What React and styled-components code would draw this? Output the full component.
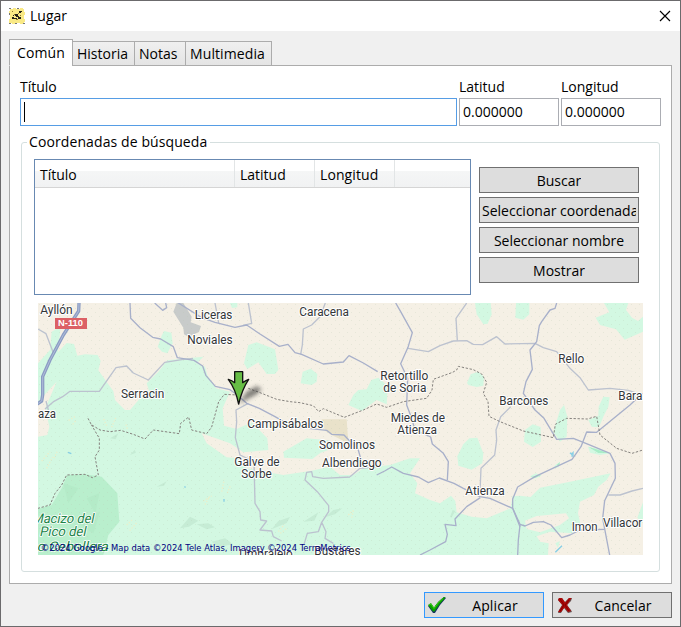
import React from "react";
import styled, { createGlobalStyle } from "styled-components";

const Global = createGlobalStyle`
  * { box-sizing: border-box; }
  body { margin: 0; background: #f0f0f0; }
`;

const Dialog = styled.div`
  width: 681px;
  height: 627px;
  display: flex;
  flex-direction: column;
  border: 1px solid #6b6a6c;
  background: #f0f0f0;
  color: #000;
  font: 14px/20px "Open Sans", "Noto Sans", sans-serif;
  overflow: hidden;
`;

const TitleBar = styled.header`
  height: 30px;
  flex: none;
  display: flex;
  align-items: center;
  justify-content: space-between;
  padding: 0 9px 0 8px;
  background: #fff;
`;

const Caption = styled.div`
  display: flex;
  align-items: center;
  gap: 5px;
`;

const Label = styled.span`
  display: block;
  white-space: nowrap;
  letter-spacing: ${(p) => p.$track || 0}px;
`;

const Tabs = styled.nav`
  display: flex;
  align-items: flex-end;
  height: 27px;
  margin: 8px 0 -1px 8px;
  flex: none;
  position: relative;
`;

const Tab = styled.div`
  width: ${(p) => p.$width}px;
  height: ${(p) => (p.$active ? 27 : 25)}px;
  padding: ${(p) => (p.$active ? "3px 0 0 7px" : "2px 0 0 4px")};
  margin-right: -1px;
  border: 1px solid #acacac;
  border-bottom-color: ${(p) => (p.$active ? "#fff" : "#acacac")};
  background: ${(p) => (p.$active ? "#fff" : "linear-gradient(#f0f0f0, #e4e4e4)")};
`;

const Panel = styled.main`
  width: 663px;
  height: 519px;
  flex: none;
  margin-left: 8px;
  padding: 11px 10px 0;
  border: 1px solid #acacac;
  background: #fff;
`;

const Fields = styled.div`
  display: grid;
  grid-template-columns: 437px 100px 100px;
  column-gap: 2px;
`;

const Field = styled.label`
  display: flex;
  flex-direction: column;
  gap: 1px;
`;

const Input = styled.div`
  height: 28px;
  padding: 3px;
  border: 1px solid ${(p) => (p.$focus ? "#569de5" : "#abadb3")};
`;

const Caret = styled.div`
  width: 1px;
  height: 20px;
  background: #000;
`;

const Group = styled.fieldset`
  width: 639px;
  height: 440px;
  margin: 6px 0 0 1px;
  padding: 7px 0 0 12px;
  border: 1px solid #d5dfdf;
  border-radius: 3px;
  min-width: 0;
`;

const Legend = styled.legend`
  margin-left: -7px;
  padding: 0 3px 0 2px;
  height: 20px;
`;

const Search = styled.div`
  display: flex;
  gap: 8px;
`;

const List = styled.div`
  width: 437px;
  height: 136px;
  border: 1px solid #6889b2;
`;

const ListHead = styled.div`
  display: grid;
  grid-template-columns: 200px 80px 80px 1fr;
  height: 28px;
  border-bottom: 1px solid #d5d5d5;
  background: linear-gradient(#fff 40%, #f5f6f6 42%, #f1f2f3);
`;

const Column = styled.div`
  padding: 5px 0 0 5px;
  border-right: 1px solid #e2e5e6;
  &:last-child { border: 0; }
`;

const Actions = styled.div`
  display: flex;
  flex-direction: column;
  gap: 4px;
  padding-top: 8px;
`;

const Button = styled.div`
  width: 160px;
  height: 26px;
  display: flex;
  justify-content: ${(p) => (p.$clip ? "flex-start" : "center")};
  padding: 3px 2px 0;
  border: 1px solid #707070;
  background: #ddd;
  > span { overflow: hidden; }
`;

const MapView = styled.svg`
  display: block;
  width: 605px;
  height: 252px;
  margin: 8px 0 0 4px;
`;

const Footer = styled.footer`
  display: flex;
  justify-content: flex-end;
  gap: 8px;
  padding: 8px 8px 0 0;
`;

const Command = styled.div`
  width: 120px;
  height: 26px;
  display: grid;
  grid-template-columns: 24px 1fr;
  align-items: center;
  justify-items: center;
  padding-right: 2px;
  border: 1px solid ${(p) => (p.$primary ? "#3399ff" : "#707070")};
  background: #ddd;
  > span { margin-top: 1px; }
`;

const WOODS = [
  "M24 205L60 165 65 110 92 95 84 172 110 144 132 147 142 182 165 178 203 180 212 198 205 226 235 268 250 288 255 315 285 345 300 345 330 310 358 290 350 265 385 230 412 196 520 185 500 205 525 215 532 240 558 280 600 290 578 340 582 392 620 402 666 382 712 430 715 465 640 472 600 445 515 415 530 445 590 487 622 490 650 520 760 540 840 528 900 515 930 540 970 540 1000 520 1080 510 1140 490 1170 490 1140 535 1162 565 1155 595 1200 615 1230 625 1263 602 1276 618 1280 652 1325 665 1370 670 1442 640 1447 604 1470 602 1502 606 1530 578 1620 560 1742 535 1730 555 1705 575 1692 600 1650 620 1644 655 1652 690 1626 715 1560 710 1520 724 1530 740 1556 745 1554 780H24V425L52 420 58 395 46 340 80 260 24 320Z",
  "M383 155L395 122 402 108 424 113 428 145 412 175 396 170Z",
  "M600 24H622L622 37 606 39Z",
  "M642 205L655 150 680 142 735 163 745 225 735 237 710 237 685 202 652 222Z",
  "M812 265L818 230 842 221 862 237 860 260 845 270Z",
  "M955 330L970 300 985 285 1010 283 1024 255 1045 248 1070 270 1072 295 1070 328 1040 315 995 348Z",
  "M760 470L830 430 895 436 922 455 872 473 847 492 762 488Z",
  "M1335 24H1382L1385 58 1373 86 1360 88 1340 58Z",
  "M1458 24H1498V58L1480 74 1456 68Z",
  "M1697 68L1738 52 1722 24H1795L1788 45 1806 68 1824 78 1839 65V110L1784 134 1758 103 1710 90Z",
  "M1311 264L1322 238 1345 230 1362 245 1360 272 1340 276 1315 270Z",
  "M1282 484L1300 448 1318 430 1342 428 1360 475 1357 505 1325 524 1285 512Z",
  "M1485 405L1508 388 1532 396 1533 440 1508 456 1482 440Z",
  "M1570 410L1590 345 1602 330 1612 365 1610 425 1590 440Z",
  "M1675 375L1705 362 1706 335 1720 305 1739 307 1735 335 1720 365 1707 397 1685 395Z",
  "M1674 455L1710 463 1742 475 1710 480 1680 473Z",
  "M1500 544L1518 535 1534 542 1510 551ZM1576 510L1590 501 1586 517 1568 520Z",
  "M1576 745L1590 738 1584 758ZM1822 668L1839 622V685Z",
];

const ROADS = [
  "M300 24L302 70 330 98 368 127 392 132 430 155 442 188 492 196 518 213 528 242 556 274 600 284 622 300 650 325 688 340 735 365 788 395 890 406 905 418 942 420 965 444 984 462 992 490",
  "M374 24L398 46 410 38 407 24M445 24L515 68 555 82 615 97 650 90 690 117 748 154 774 148 795 173 815 178 880 207 940 201 957 182 1000 204 1043 230",
  "M1097 24L1112 50 1147 113 1134 157 1112 206 1133 250 1130 330 1145 370 1155 405 1202 426 1207 447 1240 475 1255 500 1252 555",
  "M1580 24L1575 40 1560 45 1535 80 1528 92 1520 140 1500 165 1507 223 1488 260 1480 295 1515 345 1542 370 1580 433 1630 430 1675 448 1740 475 1755 505 1756 550 1724 617 1718 670 1739 780",
  "M1837 295L1800 330 1700 412 1670 411 1653 455 1626 493 1515 545 1463 576 1448 612 1448 640 1470 695",
  "M1040 540L1064 528 1085 516 1120 535 1165 546 1195 563 1228 549 1272 565 1300 580 1350 605 1380 610 1448 640 1470 688 1485 693 1510 682 1540 680 1563 690 1595 728 1620 720 1650 705 1724 703",
  "M1351 608L1310 635 1275 672 1278 692 1245 688 1252 718 1247 740 1200 765 1170 780",
  "M1470 690L1465 735 1463 780",
];

const LANES = [
  "M45 342L72 319 98 305 120 289 208 289 258 218 290 213 310 234 355 255 404 202 460 193 489 190",
  "M24 102L48 116 70 173M48 318L55 345",
  "M655 24L665 85 640 91M886 24L870 65 845 90 820 102 817 150 812 178M555 24L566 84",
  "M1134 160L1195 170 1230 152 1270 138 1310 137 1330 148 1358 149 1400 125 1425 147 1515 145 1540 158 1580 170 1620 220 1650 248 1675 285 1740 280 1795 286 1830 298",
  "M1310 24L1278 70 1282 137M1442 335L1412 365 1398 405 1400 435 1394 480 1353 520 1350 590",
  "M1839 580L1806 588 1770 600 1735 600",
  "M655 325L618 345 620 380 616 428 630 480 672 500 675 625 690 650 692 675 710 678 690 705 725 708 730 725 755 738",
  "M960 545L990 520 1040 516M960 546L880 550 848 545 845 530 830 532 825 555 862 590 896 632 896 650 875 682 865 710 832 715 822 748M875 682L888 710 885 730 910 745",
];

const BORDERS =
  "M174 370L184 389 210 405 240 410 272 406 310 418 345 432 370 405 448 416 452 385 476 366 485 405 530 416 545 396 566 320 583 298 622 300M184 389L208 430 208 465 195 485 205 540 187 548 165 538 110 540 95 570 75 595 60 630 24 640M655 280L690 293 740 313 780 320 810 323 850 332 866 350 880 341 943 367 1000 345 1040 327 1070 337 1120 320 1175 312 1190 310 1206 285 1210 253 1268 232 1280 225 1285 214 1330 224 1355 237 1370 262 1360 295 1374 320 1377 364 1410 380 1480 408 1570 428 1576 388 1610 370 1672 372 1700 364 1710 420 1760 460 1806 475 1839 465";

const PLACES = [
  ["Ayllón", 31, 56, 97], ["Liceras", 494, 72, 113], ["Noviales", 472, 147, 136],
  ["Caracena", 808, 62, 149], ["Retortillo", 1051, 254, 144], ["de Soria", 1060, 290, 129],
  ["Serracin", 273, 309, 130], ["aza", 24, 369, 54], ["Campisábalos", 652, 399, 228],
  ["Miedes de", 1082, 381, 163], ["Atienza", 1102, 416, 119], ["Rello", 1585, 204, 78],
  ["Barcones", 1408, 331, 147], ["Bara", 1765, 315, 72], ["Somolinos", 867, 462, 168],
  ["Albendiego", 876, 516, 179], ["Galve de", 613, 513, 136], ["Sorbe", 634, 549, 91],
  ["Atienza", 1306, 600, 118], ["Imon", 1625, 708, 78], ["Villacor", 1719, 696, 118],
  ["Bustares", 853, 780, 139], ["Umbralejo", 628, 789, 160],
];

const PARK = [
  ["Macizo del", 5, 684, 186],
  ["Pico del", 28, 724, 139],
  ["o Cebollera", 20, 767, 214],
];

function RegionMap() {
  return (
    <MapView viewBox="24 24 1815 756">
      <defs>
        <filter id="soft" x="-50%" y="-50%" width="200%" height="200%">
          <feGaussianBlur stdDeviation="6" />
        </filter>
        <pattern id="grain" width="24" height="24" patternUnits="userSpaceOnUse">
          <path d="M3 3h3v3h-3zM15 15h3v3h-3z" fill="#b9c8b0" opacity=".25" />
        </pattern>
      </defs>
      <path d="M24 24H1839V780H24Z" fill="#f5f0e5" />
      <g fill="#d3f8e2">{WOODS.map((d) => <path key={d} d={d} />)}</g>
      <path d="M1485 677L1520 663 1608 655 1617 670 1590 690 1530 712 1490 702Z" fill="#f5f0e5" />
      <path d="M24 641L65 630 95 580 112 540 165 538 215 545 262 595 268 680 235 720 220 780H24Z" fill="#b9efcd" />
      <path d="M100 565l45 15-30 45zM170 610l38-15-12 60zM135 680l75-30-20 65z" fill="#b0e7c5" opacity=".6" />
      <path d="M1505 545L1535 539 1515 549ZM1675 455L1735 474 1705 474ZM1580 510L1590 501 1587 513Z" fill="#a9edc8" />
      <path d="M430 50L440 24H460L485 65 482 82 513 93 507 111 475 125 462 118 460 98Z" fill="#c8cbca" />
      <path d="M875 373H950L955 445 905 420 885 407Z" fill="#e9e2ca" />
      <g fill="#c2e8d1" opacity=".75">
        <path d="M725 703l20-25 35-12-10 18zM820 680l45-28-12 25zM885 667l25-22 27-5-22 18zM450 700l30-35 25 12-28 18zM500 688l35-3 20 12-25 6zM545 740l40-10 25 18-45 8z" />
        <path d="M300 480l14-16 4 9zM240 430l25-15-8 18zM380 575l30-16-8 13zM1260 665l8-20 8 3-12 20z" />
      </g>
      <path d="M116 376l20-12m-8 24l12-14m90 18l-9-20m24 25l12-28m35 32l-6-18M35 498l25-28m12 20l10-22m-32 52l18-34M290 690l18-17m-9 34l24-27M520 618l25-15m-20 26l14-25M575 590l8-36m9 40l9-22M745 710l18-22m-12 27l22-17M955 660l15-14m-5 22l6-25" stroke="#ecefca" strokeWidth="4" strokeDasharray="4 5" fill="none" />
      <path d="M114 472l10 4M463 575l4 2M582 612v8M1620 473l5 5 4-5v10h-5M1576 772l20-20" stroke="#86cee5" strokeWidth="4" fill="none" />
      <path d="M24 24H1839V780H24Z" fill="url(#grain)" />
      <g fill="none" strokeLinejoin="round">
        <g stroke="#bcc2cf" strokeWidth="4">{LANES.map((d) => <path key={d} d={d} />)}</g>
        <g stroke="#a8b0ca" strokeWidth="4">{ROADS.map((d) => <path key={d} d={d} />)}</g>
        <path d="M147 24L146 48 100 120 60 195 38 245V300L35 318 20 328" stroke="#8b9cc3" strokeWidth="10" />
        <path d="M147 24L146 48 100 120 60 195 38 245V300L35 318 20 328" stroke="#aebbd8" strokeWidth="3" />
        <path d={BORDERS} stroke="#85827e" strokeWidth="3" strokeDasharray="7 5" />
      </g>
      <g fontFamily="Roboto, sans-serif" fontSize="36" fill="#333638" stroke="#fff" strokeWidth="6" strokeLinejoin="round" paintOrder="stroke">
        {PLACES.map(([name, x, y, w]) => (
          <text key={name + x} x={x} y={y} textLength={w} lengthAdjust="spacingAndGlyphs">{name}</text>
        ))}
        <g fill="#208448" fontSize="40" strokeWidth="5">
          {PARK.map(([name, x, y, w]) => (
            <text key={name} transform={`translate(${x} ${y}) skewX(-12)`} textLength={w} lengthAdjust="spacingAndGlyphs">{name}</text>
          ))}
        </g>
      </g>
      <path d="M75 69H171V102H75Z" fill="#dc6065" />
      <text x="84" y="94" textLength="75" lengthAdjust="spacingAndGlyphs" fontFamily="Liberation Sans, sans-serif" fontWeight="700" fontSize="26" fill="#fff">N-110</text>
      <path d="M626 326L650 290 680 273 695 282 680 298Z" fill="#333" opacity=".6" filter="url(#soft)" />
      <path d="M614 230H638V263Q649 256 656 253Q636 283 626 327Q617 283 595 253Q606 256 614 263Z" fill="#67bd45" stroke="#111" strokeWidth="4" strokeLinejoin="round" />
      <text x="33" y="768" textLength="929" lengthAdjust="spacingAndGlyphs" fontFamily="DejaVu Sans, sans-serif" fontSize="28" fill="#000080">©2024 Google - Map data ©2024 Tele Atlas, Imagery ©2024 TerraMetrics</text>
    </MapView>
  );
}

const AppIcon = () => (
  <svg width="16" height="16" viewBox="0 0 16 16">
    <path d="M1 1H4V0H7V1H11V0H14V1H15V4H16V7H15V11H16V14H15V16H11V15H7V16H3V15H0V11H1V7H0V3H1Z" fill="#f9e986" />
    <path d="M0 0H2V1H0ZM8 0H10V1H8ZM0 5H1V7H0ZM0 15H2V16H0ZM6 15H8V16H6ZM14 15H16V16H14Z" fill="#777" />
    <path d="M10 3H13V4H12V5H10ZM6 6H9V8H10V9H7V8H6ZM4 7H5V8H4ZM3 9H5V10H6V11H3ZM6 10H8V11H6ZM9 9H12V11H9Z" fill="#24231c" />
    <path d="M3 3h1v1H3zM9 5h1v1H9zM5 6h1v1H5zM11 7h1v1h-1zM7 11h2v1H7z" fill="#8d7b31" />
  </svg>
);

const CloseIcon = () => (
  <svg width="12" height="12" viewBox="0 0 12 12">
    <path d="M1 1L11 11M11 1L1 11" stroke="#000" strokeWidth="1.15" />
  </svg>
);

const CheckIcon = () => (
  <svg width="19" height="18" viewBox="0 0 19 18">
    <path d="M0 10L3 8 6 12Q10 5 16 1L18 2Q12 8 7 17H5Z" fill="#18345f" />
    <path d="M0 9L3 7 6 11.5Q10 5 16 1L17.5 1.5Q11 8 6.5 15.5H5Z" fill="#08a000" />
    <path d="M1 9L3 8 6 12.5Q10 6 15 2.5" stroke="#3ed018" fill="none" />
  </svg>
);

const CrossIcon = () => (
  <svg width="16" height="17" viewBox="0 0 16 17">
    <path d="M2 1H5L8 5 12 1H15L14 4 10 8 14 13 15 15 11 16 7 11 4 16H1L2 13 5 8 1 3Z" fill="#6a5151" />
    <path d="M2 1H5L8 5.5 12 1H14.5L10 8 14 14 11 15 7.5 10.5 4 15H1L5.5 8 1 3Z" fill="#ad0808" />
    <path d="M3 2L7 8 3 14M12 3L8 8 12 14" stroke="#850000" strokeWidth="1" fill="none" />
  </svg>
);

export default function App() {
  return (
    <>
      <Global />
      <Dialog>
        <TitleBar>
          <Caption><AppIcon /><Label>Lugar</Label></Caption>
          <CloseIcon />
        </TitleBar>
        <Tabs>
          <Tab $active $width={64}><Label $track={0.1}>Común</Label></Tab>
          <Tab $width={63}><Label>Historia</Label></Tab>
          <Tab $width={52}><Label>Notas</Label></Tab>
          <Tab $width={87}><Label $track={0.1}>Multimedia</Label></Tab>
        </Tabs>
        <Panel>
          <Fields>
            <Field><Label>Título</Label><Input $focus><Caret /></Input></Field>
            <Field><Label>Latitud</Label><Input><Label>0.000000</Label></Input></Field>
            <Field><Label>Longitud</Label><Input><Label>0.000000</Label></Input></Field>
          </Fields>
          <Group>
            <Legend><Label $track={0.1}>Coordenadas de búsqueda</Label></Legend>
            <Search>
              <List>
                <ListHead>
                  <Column><Label>Título</Label></Column>
                  <Column><Label>Latitud</Label></Column>
                  <Column><Label $track={0.1}>Longitud</Label></Column>
                  <Column />
                </ListHead>
              </List>
              <Actions>
                <Button><Label>Buscar</Label></Button>
                <Button $clip><Label>Seleccionar coordenadas</Label></Button>
                <Button><Label>Seleccionar nombre</Label></Button>
                <Button><Label>Mostrar</Label></Button>
              </Actions>
            </Search>
            <RegionMap />
          </Group>
        </Panel>
        <Footer>
          <Command $primary><CheckIcon /><Label $track={0.15}>Aplicar</Label></Command>
          <Command><CrossIcon /><Label>Cancelar</Label></Command>
        </Footer>
      </Dialog>
    </>
  );
}
